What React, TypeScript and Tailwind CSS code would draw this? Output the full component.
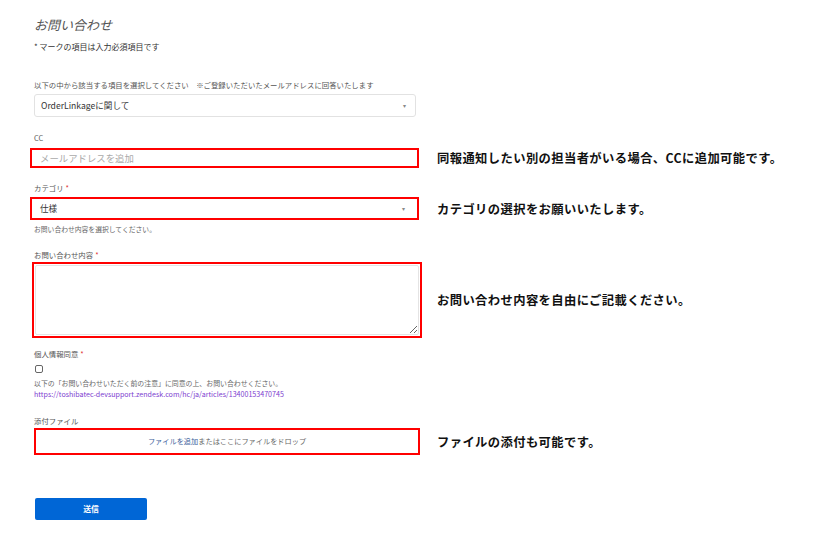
import React from 'react';

const jp = '"Noto Sans CJK JP", "Noto Sans", sans-serif';

const Required = () => <span className="ml-[2px] text-[#e03131]">*</span>;

const Note = ({ children }: { children: React.ReactNode }) => (
  <p className="whitespace-nowrap text-[12.3px] font-bold leading-[16px] tracking-[0.4px] text-[#111]">{children}</p>
);

const App = () => {
  return (
    <main className="min-h-screen bg-white pl-[34px] pt-[16px] text-[#555]" style={{ fontFamily: jp }}>
      <h1 className="text-[13px] italic leading-[18px] text-[#555]">お問い合わせ</h1>
      <p className="mt-[7px] text-[8px] leading-[12px] text-[#333]">* マークの項目は入力必須項目です</p>

      <label className="mt-[26px] block text-[7.4px] leading-[12px] text-[#555]">
        以下の中から該当する項目を選択してください　※ご登録いただいたメールアドレスに回答いたします
      </label>
      <div className="mt-[3px] flex h-[23px] w-[382px] items-center justify-between rounded-[3px] border border-[#e2e2e2] px-[6px]">
        <span className="text-[8.6px] text-[#333]">OrderLinkageに関して</span>
        <span className="mr-[3px] text-[6px] text-[#888]">▾</span>
      </div>

      <label className="mt-[15px] block text-[7.4px] leading-[12px] text-[#555]">CC</label>
      <div className="mt-[4px] flex items-center">
        <div className="-ml-[4px] flex h-[20px] w-[389px] items-center border-2 border-[#ff0000] px-[8px]">
          <span className="text-[9.4px] text-[#aaa]">メールアドレスを追加</span>
        </div>
        <div className="ml-[18px]">
          <Note>同報通知したい別の担当者がいる場合、CCに追加可能です。</Note>
        </div>
      </div>

      <label className="mt-[14px] block text-[7.4px] leading-[12px] text-[#555]">
        カテゴリ<Required />
      </label>
      <div className="mt-[3px] flex items-center">
        <div className="-ml-[4px] flex h-[23px] w-[389px] items-center justify-between border-2 border-[#ff0000] px-[8px]">
          <span className="text-[8.6px] text-[#333]">仕様</span>
          <span className="mr-[4px] text-[6px] text-[#888]">▾</span>
        </div>
        <div className="ml-[18px]">
          <Note>カテゴリの選択をお願いいたします。</Note>
        </div>
      </div>
      <p className="mt-[4px] text-[6.8px] leading-[10px] text-[#666]">お問い合わせ内容を選択してください。</p>

      <label className="mt-[15px] block text-[7.4px] leading-[12px] text-[#555]">
        お問い合わせ内容<Required />
      </label>
      <div className="mt-[1px] flex items-center">
        <div className="-ml-[2px] flex h-[76px] w-[390px] border-2 border-[#ff0000] p-[1px]">
          <textarea className="h-full w-full resize-y rounded-[2px] border border-[#e4e4e4] outline-none" />
        </div>
        <div className="ml-[15px]">
          <Note>お問い合わせ内容を自由にご記載ください。</Note>
        </div>
      </div>

      <label className="mt-[10px] block text-[7.4px] leading-[12px] text-[#555]">
        個人情報同意<Required />
      </label>
      <div className="ml-[1px] mt-[5px] h-[8px] w-[8px] rounded-[2px] border border-[#666]" />
      <p className="mt-[5px] text-[6.9px] leading-[10px] text-[#666]">
        以下の「お問い合わせいただく前の注意」に同意の上、お問い合わせください。
      </p>
      <a className="mt-[1px] block text-[7.1px] leading-[10px] text-[#7d3ccf]">
        https://toshibatec-devsupport.zendesk.com/hc/ja/articles/13400153470745
      </a>

      <label className="mt-[16px] block text-[7.4px] leading-[12px] text-[#555]">添付ファイル</label>
      <div className="mt-[1px] flex items-center">
        <div className="flex h-[27px] w-[386px] items-center justify-center border-2 border-[#ff0000]">
          <span className="text-[7.2px] text-[#666]">
            <span className="text-[#3d5f9c]">ファイルを追加</span>またはここにファイルをドロップ
          </span>
        </div>
        <div className="ml-[17px]">
          <Note>ファイルの添付も可能です。</Note>
        </div>
      </div>

      <button className="ml-[1px] mt-[43px] flex h-[22px] w-[112px] items-center justify-center rounded-[2px] bg-[#0066d6] text-[7.8px] font-bold text-white">
        送信
      </button>
    </main>
  );
};

export default App;
